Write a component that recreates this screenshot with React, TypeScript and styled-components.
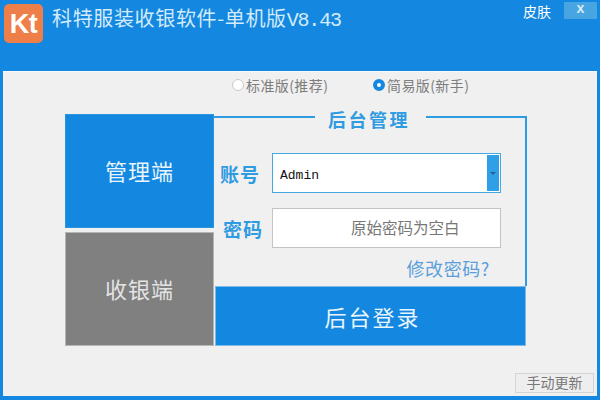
import styled, { createGlobalStyle } from "styled-components"

const GlobalStyle = createGlobalStyle`
  html, body {
    margin: 0;
    padding: 0;
    background: #1488e0;
  }
`

const CJK = `"Noto Sans CJK SC", "Liberation Sans", sans-serif`
const BLUE = "#1488e0"
const LABEL_BLUE = "#2f9be0"

const Window = styled.div`
  width: 600px;
  height: 400px;
  display: flex;
  flex-direction: column;
  overflow: hidden;
  background: ${BLUE};
  font-family: ${CJK};
  padding: 0 3px 4px;
  box-sizing: border-box;
`

const TitleBar = styled.header`
  height: 71px;
  flex: none;
  display: flex;
  align-items: flex-start;
  margin: 0 -3px;
  padding: 4px 3px 0 4px;
  box-sizing: border-box;
`

const Logo = styled.div`
  width: 39px;
  height: 39px;
  flex: none;
  border-radius: 5px;
  background: #ee7f48;
  color: #fff;
  font: bold 27px/41px "Liberation Sans", sans-serif;
  text-align: center;
  letter-spacing: -0.5px;
`

const AppTitle = styled.h1`
  margin: 0 0 0 9px;
  font-size: 20px;
  line-height: 28px;
  font-weight: 400;
  color: #d3ebfb;
  letter-spacing: 0.65px;
  white-space: nowrap;
`

const Version = styled.span`
  font-family: "Liberation Mono", monospace;
  font-size: 20px;
  letter-spacing: -1.2px;
`

const TitleTools = styled.div`
  margin-left: auto;
  display: flex;
  align-items: flex-start;
  gap: 13px;
`

const SkinLink = styled.span`
  font-size: 14px;
  line-height: 14px;
  color: #fff;
`

const CloseButton = styled.div`
  width: 33px;
  height: 17px;
  margin-top: -2px;
  background: #47a5e2;
  color: #dcebf0;
  font: bold 14px/15px "Liberation Mono", monospace;
  text-align: center;
`

const Body = styled.main`
  flex: 1;
  display: flex;
  flex-direction: column;
  background: #f0f0f0;
  box-shadow: inset 0 1px 0 #f8fbfd;
`

const RadioRow = styled.div`
  height: 27px;
  padding: 1px 0 0 229px;
  box-sizing: border-box;
  display: flex;
  align-items: center;
  color: #7d7d7d;
  font-size: 14px;
  letter-spacing: 0.4px;
`

const RadioOption = styled.label<{ $width: number }>`
  width: ${(p) => p.$width}px;
  display: flex;
  align-items: center;
  gap: 2px;
  white-space: nowrap;
`

const RadioDot = styled.span<{ $checked?: boolean }>`
  width: 12px;
  height: 12px;
  border-radius: 50%;
  box-sizing: border-box;
  background: #fff;
  border: ${(p) => (p.$checked ? `4px solid ${BLUE}` : "1px solid #c8c8c8")};
`

const Panel = styled.section`
  width: 461px;
  height: 232px;
  margin: 16px 0 0 62px;
  display: flex;
`

const SideTabs = styled.div`
  width: 149px;
  flex: none;
  display: flex;
  flex-direction: column;
  justify-content: space-between;
`

const SideTab = styled.div<{ $active?: boolean }>`
  height: 114px;
  box-sizing: border-box;
  padding-bottom: ${(p) => (p.$active ? 2 : 3)}px;
  display: flex;
  align-items: center;
  justify-content: center;
  background: ${(p) => (p.$active ? BLUE : "#808080")};
  color: ${(p) => (p.$active ? "#e8f5fd" : "#e4e4e4")};
  font-size: 22px;
  letter-spacing: 1px;
  box-shadow: inset 0 0 0 1px ${(p) => (p.$active ? "#2b95dc" : "#b5b5b5")};
`

const LoginArea = styled.div`
  flex: 1;
  display: flex;
  flex-direction: column;
  padding-top: 2px;
`

const Frame = styled.div`
  flex: 1;
  display: flex;
  flex-direction: column;
  border-right: 2px solid ${LABEL_BLUE};
`

const Legend = styled.div`
  height: 37px;
  flex: none;
  display: flex;
  align-items: flex-start;
  color: ${LABEL_BLUE};
  font-size: 18px;
  line-height: 6px;
  font-weight: 700;
  letter-spacing: 2.5px;
  &::before,
  &::after {
    content: "";
    height: 2px;
    background: ${LABEL_BLUE};
  }
  &::before {
    width: 101px;
    margin-right: 13px;
  }
  &::after {
    flex: 1;
    margin-left: 16px;
  }
`

const FieldArea = styled.div`
  flex: 1;
  display: flex;
  flex-direction: column;
  padding: 0 24px 0 6px;
`

const FieldRow = styled.div`
  display: grid;
  grid-template-columns: 52px 229px;
  align-items: center;
  margin-bottom: 15px;
`

const FieldLabel = styled.span<{ $inset?: number }>`
  padding-left: ${(p) => p.$inset ?? 0}px;
  font-size: 19px;
  font-weight: 700;
  letter-spacing: 1px;
  color: ${LABEL_BLUE};
  white-space: nowrap;
`

const AccountBox = styled.div`
  height: 40px;
  box-sizing: border-box;
  display: flex;
  align-items: stretch;
  background: #fff;
  border: 1px solid #44a8e4;
`

const AccountValue = styled.span`
  flex: 1;
  padding-left: 7px;
  font: 13px/43px "Liberation Mono", monospace;
  color: #111;
`

const DropButton = styled.span`
  width: 12px;
  margin: 1px;
  background: #2f9fe8;
  display: flex;
  align-items: center;
  justify-content: center;
  &::after {
    content: "";
    border: 3px solid transparent;
    border-top: 3px solid #26619c;
    border-bottom: 0;
  }
`

const PasswordBox = styled.div`
  height: 40px;
  box-sizing: border-box;
  background: #fff;
  border: 1px solid #c4c4c4;
  padding-left: 78px;
  color: #777;
  font-size: 15.5px;
  line-height: 37px;
  white-space: nowrap;
`

const ChangeLink = styled.a`
  align-self: flex-end;
  margin: -9px 11px 0 0;
  height: 28px;
  color: #5a9fdc;
  font-size: 18px;
  line-height: 28px;
  letter-spacing: 0.6px;
`

const LoginButton = styled.button`
  height: 60px;
  flex: none;
  margin: 0 1px 0 1px;
  border: 0;
  padding: 0 0 0 4px;
  background: ${BLUE};
  box-shadow: inset 0 0 0 1px #7fb9e4;
  color: #e8f5fd;
  font-family: ${CJK};
  font-size: 22px;
  letter-spacing: 2px;
`

const Footer = styled.div`
  margin-top: 27px;
  padding-right: 3px;
  display: flex;
  justify-content: flex-end;
`

const UpdateButton = styled.div`
  width: 79px;
  height: 20px;
  box-sizing: border-box;
  border: 1px solid #d4d4d4;
  background: #eeeeee;
  color: #777;
  font-size: 14px;
  line-height: 17px;
  text-align: center;
`

export default function App() {
  return (
    <>
      <GlobalStyle />
      <Window>
        <TitleBar>
          <Logo>Kt</Logo>
          <AppTitle>
            科特服装收银软件-单机版<Version>V8.43</Version>
          </AppTitle>
          <TitleTools>
            <SkinLink>皮肤</SkinLink>
            <CloseButton>x</CloseButton>
          </TitleTools>
        </TitleBar>
        <Body>
          <RadioRow>
            <RadioOption $width={141}>
              <RadioDot />
              标准版(推荐)
            </RadioOption>
            <RadioOption $width={120}>
              <RadioDot $checked />
              简易版(新手)
            </RadioOption>
          </RadioRow>
          <Panel>
            <SideTabs>
              <SideTab $active>管理端</SideTab>
              <SideTab>收银端</SideTab>
            </SideTabs>
            <LoginArea>
              <Frame>
                <Legend>后台管理</Legend>
                <FieldArea>
                  <FieldRow>
                    <FieldLabel>账号</FieldLabel>
                    <AccountBox>
                      <AccountValue>Admin</AccountValue>
                      <DropButton />
                    </AccountBox>
                  </FieldRow>
                  <FieldRow>
                    <FieldLabel $inset={3}>密码</FieldLabel>
                    <PasswordBox>原始密码为空白</PasswordBox>
                  </FieldRow>
                  <ChangeLink>修改密码?</ChangeLink>
                </FieldArea>
              </Frame>
              <LoginButton>后台登录</LoginButton>
            </LoginArea>
          </Panel>
          <Footer>
            <UpdateButton>手动更新</UpdateButton>
          </Footer>
        </Body>
      </Window>
    </>
  )
}
